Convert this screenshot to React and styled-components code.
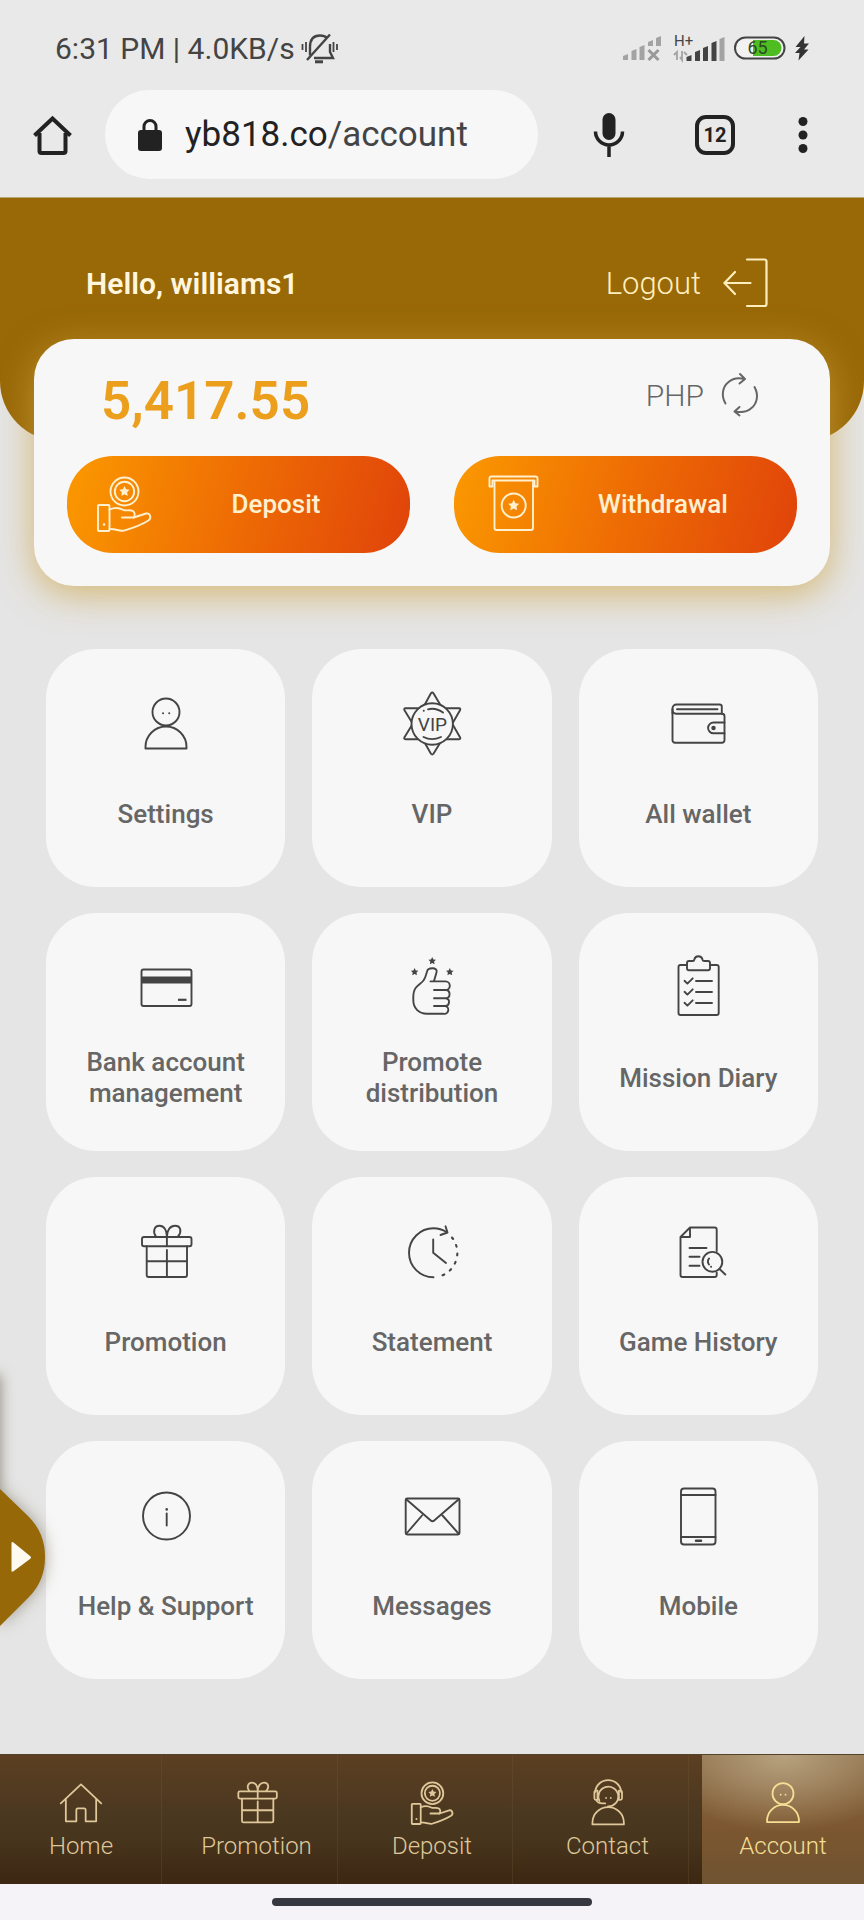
import React from 'react';
import styled, { createGlobalStyle } from 'styled-components';

const GlobalStyle = createGlobalStyle`
  * {
    box-sizing: border-box;
  }

  body {
    margin: 0;
    background: #f6f3f8;
    font-family: Roboto, "Liberation Sans", sans-serif;
  }

  button {
    padding: 0;
    border: 0;
    background: none;
    color: inherit;
    font: inherit;
    cursor: pointer;
  }

  a {
    color: inherit;
    text-decoration: none;
  }

  svg {
    display: block;
    flex: none;
  }
`;

const Page = styled.div`
  position: relative;
  overflow: hidden;
  background: #e5e5e5;
`;

/* phone status bar */

const StatusBar = styled.div`
  display: flex;
  align-items: center;
  justify-content: space-between;
  height: 90px;
  padding: 6px 54px 0 55px;
  background: #e9e9e9;
  color: #444;
  font-size: 30px;
`;

const StatusGroup = styled.div`
  display: flex;
  align-items: center;
  gap: ${ ({ $gap }) => $gap }px;
`;

/* browser toolbar */

const Toolbar = styled.div`
  display: flex;
  align-items: center;
  padding: 0 49px 18px 32px;
  border-bottom: 1px solid #b9a878;
  background: #e9e9e9;
  color: #222;
`;

const AddressBar = styled.div`
  display: flex;
  flex: 1;
  align-items: center;
  gap: 22px;
  height: 89px;
  margin: 0 41px 0 32px;
  padding-left: 32px;
  border-radius: 45px;
  background: #f7f7f7;
`;

const Url = styled.span`
  color: #444;
  font-size: 35px;

  b {
    color: #222;
    font-weight: 400;
  }
`;

const ToolbarActions = styled.div`
  display: flex;
  align-items: center;
  gap: 48px;
`;

const ToolbarButton = styled.button`
  display: flex;
  justify-content: center;
  width: ${ ({ $width }) => $width }px;
`;

const TabCount = styled.span`
  width: 40px;
  height: 40px;
  border: 4px solid #222;
  border-radius: 11px;
  font-size: 20px;
  font-weight: 700;
  line-height: 32px;
`;

/* account header */

const Hero = styled.header`
  padding: 60px 96px 133px 86px;
  border-radius: 0 0 60px 60px;
  background: #996807;
  color: #fff6dd;
`;

const HeroRow = styled.div`
  display: flex;
  align-items: center;
  justify-content: space-between;
  height: 50px;
`;

const Greeting = styled.h1`
  margin: 0;
  font-size: 30px;
  font-weight: 600;
`;

const Logout = styled.button`
  display: flex;
  align-items: center;
  gap: 21px;
  color: #ffeebd;
  font-size: 31px;
  font-weight: 300;
`;

const BalanceCard = styled.section`
  margin: -102px 34px 0;
  padding: 32px 33px 33px;
  border-radius: 40px;
  background: #f7f7f7;
  box-shadow: 0 8px 36px rgba(205, 162, 62, 0.7);
`;

const BalanceRow = styled.div`
  display: flex;
  justify-content: space-between;
  height: 60px;
  margin-bottom: 25px;
  padding: 0 37px 0 34px;
`;

const Amount = styled.div`
  color: #eb9f1c;
  font-size: 53px;
  font-weight: 600;
  line-height: 60px;
`;

const Currency = styled.div`
  display: flex;
  align-items: center;
  gap: 16px;
  height: 48px;
  color: #666;
  font-size: 30px;
  font-weight: 300;
`;

const CashButtons = styled.div`
  display: grid;
  grid-template-columns: 1fr 1fr;
  gap: 44px;
`;

const CashButton = styled.button`
  display: flex;
  align-items: center;
  height: 97px;
  padding: 0 18px 2px 21px;
  border-radius: 46px;
  background: linear-gradient(105deg, #fb9900, #ee6c04 50%, #e0430a);
  color: #fff0cf;
  font-size: 26px;
  font-weight: 500;

  span {
    flex: 1;
  }
`;

/* menu tiles */

const TileGrid = styled.main`
  display: grid;
  grid-template-columns: repeat(3, 1fr);
  gap: 26px 27px;
  padding: 63px 46px 75px;
`;

const Tile = styled.a`
  display: flex;
  flex-direction: column;
  align-items: center;
  gap: 23px;
  min-height: 238px;
  padding: 39px 20px 0;
  border-radius: 50px;
  background: #f7f7f7;
  color: #444;
`;

const TileLabel = styled.span`
  display: flex;
  align-items: center;
  min-height: 62px;
  color: #666;
  font-size: 26px;
  font-weight: 500;
  line-height: 31px;
  text-align: center;
`;

/* drawer handle hanging on the left edge */

const DrawerShade = styled.div`
  position: absolute;
  bottom: 400px;
  left: -20px;
  width: 20px;
  height: 145px;
  box-shadow: 0 0 14px rgba(80, 75, 50, 0.6);
`;

const DrawerHandle = styled.button`
  position: absolute;
  bottom: 278px;
  left: 0;
  filter: drop-shadow(0 0 8px rgba(90, 80, 50, 0.5));
`;

/* bottom navigation */

const BottomNav = styled.nav`
  display: flex;
  justify-content: space-between;
  border-top: 1px solid #54422c;
  background: linear-gradient(#5c3f22, #4b3820 45%, #48351d 65%, #3c2712);
`;

const NavItem = styled.a`
  display: flex;
  flex-direction: column;
  align-items: center;
  gap: 1px;
  width: 162px;
  padding: 20px 0 24px;
  box-shadow: ${ ({ $active }) => ($active ? 'none' : 'inset -1px 0 rgba(120, 95, 60, 0.25)') };
  background: ${ ({ $active }) => ($active
    ? 'radial-gradient(ellipse 80% 60% at 50% 0, #b7a17e, transparent), linear-gradient(#8a6c46, #7c5730 55%, #6f5330)'
    : 'none') };
  color: ${ ({ $active }) => ($active ? '#f5df94' : '#dfc79a') };
  font-size: 24px;
  font-weight: 300;
  line-height: 28px;
`;

const GestureBar = styled.div`
  display: flex;
  justify-content: center;
  padding: 14px 0;
  background: #f6f3f8;
`;

const GestureHandle = styled.div`
  width: 37%;
  height: 8px;
  border-radius: 4px;
  background: #36373f;
`;

/* icons, all drawn on a 72 unit square */

const Icon = ({ size = 72, stroke = 1.9, children }) => (
  <svg
    width={ size }
    height={ size }
    viewBox="0 0 72 72"
    fill="none"
    stroke="currentColor"
    strokeWidth={ stroke }
    strokeLinecap="round"
    strokeLinejoin="round"
    aria-hidden="true"
  >
    { children }
  </svg>
);

const Star = ({ x, y, r }) => {
  const points = Array.from({ length: 10 }, (_, i) => {
    const radius = i % 2 ? r * 0.5 : r;
    const angle = (i * Math.PI) / 5;
    return `${ (x + radius * Math.sin(angle)).toFixed(2) },${ (y - radius * Math.cos(angle)).toFixed(2) }`;
  });
  return <polygon points={ points.join(' ') } fill="currentColor" stroke="none" />;
};

const Person = () => (
  <>
    <circle cx="36" cy="24" r="13.5" />
    <path d="M15.5 60.5v-1.5a20.5 20.5 0 0 1 41 0v1.5z" />
    <path d="M33 25.3h.1M39.2 25.3h.1" />
  </>
);

const Vip = () => (
  <>
    <path d="M36 5L64.5 51.5H8z" stroke="none" />
    <path d="M36 4.500L53 36H19zM36 66.500L19 36H53z" stroke="none" />
    <path d="M28 18L34.800 5.500q1.400-2 2.800 0L45 18M28 53.500L34.800 65.500q1.400 2 2.800 0L45 53.500" />
    <path d="M22 20.300H9.500q-2 .2-1 2L16 34.500M22 51.300H9.500q-2-.2-1-2L16 37M50 20.300H63q2 .2 1 2L57 34.500M50 51.300H63q2-.2 1-2L57 37" />
    <circle cx="36.2" cy="36" r="20.7" fill="#f7f7f7" />
    <path d="M32 21.3c5-1.2 10.5 0 15 3.3M27.7 22.8h.1M27.5 49c5 2.6 12 2.6 17.5 0" />
    <text x="36.5" y="42.5" fill="currentColor" stroke="none" fontSize="19" fontWeight="400" textAnchor="middle">VIP</text>
  </>
);

const Wallet = () => (
  <>
    <path d="M10.5 25.5v-5a4 4 0 0 1 4-4h43a2.3 2.3 0 0 1 2.3 2.3v7" />
    <path d="M10.5 21v31.2a2.5 2.5 0 0 0 2.5 2.5h47a2.5 2.5 0 0 0 2.5-2.5v-24a2.5 2.5 0 0 0-2.5-2.5H14a3.5 3.5 0 0 1-3.5-3.5" />
    <path d="M15 21.3h40.5" />
    <path d="M62.5 34.5h-11a5.4 5.4 0 0 0 0 10.8h11" />
    <circle cx="51.5" cy="40" r="1.3" fill="currentColor" />
  </>
);

const BankCard = () => (
  <>
    <rect x="11.5" y="17.5" width="50" height="36.5" rx="2" />
    <path d="M12 25.5h49v5h-49z" fill="currentColor" />
    <path d="M48 47.8h8.500" strokeWidth="2.2" strokeLinecap="butt" />
  </>
);

const ThumbUp = () => (
  <>
    <Star x={ 36.2 } y={ 9 } r={ 4 } />
    <Star x={ 18.6 } y={ 20 } r={ 4 } />
    <Star x={ 53.8 } y={ 20 } r={ 4 } />
    <path d="M38 29L40.5 20.5C41.5 17.5 39 16.3 36.5 16.3C34 16.3 31.500 17 31 19.5C30 23 29.5 26 27.5 28.5C25 31.5 22 33 20 35.5C18 38 17.3 41 17.3 45V48C17.3 56 22.5 61.7 31 61.7H47a3.85 3.85 0 0 0 2.5-7.7" />
    <path d="M34.5 29.4H49.5a4.3 4.3 0 0 1 0 8.6H38M50 38a4.2 4.2 0 0 1 0 8.3H38M50 46.3a3.9 3.9 0 0 1-1 7.7H38" />
  </>
);

const Clipboard = () => (
  <>
    <path d="M25 13H18.5a2 2 0 0 0-2 2V61a2 2 0 0 0 2 2H54.7a2 2 0 0 0 2-2V15a2 2 0 0 0-2-2H48" />
    <path d="M27 18.3h19a2 2 0 0 0 2-2V11a2 2 0 0 0-2-2H42a1.5 1.5 0 0 1-1.5-1.5a4.2 4.2 0 0 0-8.200 0A1.5 1.5 0 0 1 31 9H27a2 2 0 0 0-2 2v5.3a2 2 0 0 0 2 2z" />
    <path d="M22.5 28.8l2.9 2.8 5.3-5.3M34 29H50M22.5 39.8l2.9 2.8 5.3-5.3M34 40H50M22.5 50.8l2.9 2.8 5.3-5.3M34 51H50" />
  </>
);

const Gift = () => (
  <>
    <rect x="12" y="21" width="49.5" height="9.3" rx="2" />
    <path d="M16.7 30.3V59a2 2 0 0 0 2 2H55a2 2 0 0 0 2-2V30.3M16.7 45.3H57M36.9 21v9M36.9 34V61" />
    <path d="M36.9 20.5C36.9 14 34 9.7 29.5 9.7C24 9.7 22.5 16 26 20.5M36.9 20.5C36.9 14 40.5 9.7 45 9.7C51 9.7 52 16 48 20.5" />
  </>
);

const ClockBack = () => (
  <>
    <path d="M37.5 61.3a24.5 24.5 0 0 1 0-49c4.7 0 9 1.2 13 3.7" />
    <path d="M49.500 10.3l2 6.2-7 2.5M37.2 23.5V36.7L50 47" />
    <path d="M56 21.5A24.500 24.500 0 0 1 43 60.5" strokeDasharray="1.8 6.8" strokeWidth="2.1" />
  </>
);

const DocSearch = () => (
  <>
    <path d="M54.7 35V13.5a2 2 0 0 0-2-2H28L18.5 21V59a2 2 0 0 0 2 2H52.7a2 2 0 0 0 2-2V56.5M28 11.5V21H18.5" />
    <path d="M27.5 32H44.5M27.5 40.8H37.5M27.5 49.7H37.5" />
    <circle cx="50.4" cy="45.8" r="9.9" />
    <path d="M57.5 53L63.3 58.5M47 42.5a5 5 0 0 0 0 6M49 50.8h.1" />
  </>
);

const Info = () => (
  <>
    <circle cx="36.5" cy="36" r="23.5" />
    <path d="M36.7 29.3v.1" strokeWidth="2.5" />
    <path d="M36.7 33.5V45.5" />
  </>
);

const Envelope = () => (
  <>
    <rect x="9.7" y="18.5" width="53.8" height="36" rx="1.5" />
    <path d="M10.5 19.5L34.5 40.3a3 3 0 0 0 4 0L62.5 19.5M10.5 53.5L26 35.5M62.5 53.5L46.5 35.5" />
  </>
);

const Phone = () => (
  <>
    <rect x="19" y="8.5" width="34.5" height="56" rx="3" />
    <path d="M19 15H53.5M19 57H53.5" />
    <path d="M34 60.7h5" strokeWidth="2.5" />
  </>
);

const CoinHand = () => (
  <>
    <circle cx="36.5" cy="23.5" r="14" />
    <circle cx="36.5" cy="23.5" r="9.7" />
    <Star x={ 36.5 } y={ 23.5 } r={ 5.5 } />
    <rect x="10" y="37" width="11.5" height="26" rx="1" />
    <path d="M16 56.5h.1" strokeWidth="2.5" />
    <path d="M21.5 41.5C26 39.5 31 39.5 35 41.8C37 42.8 41 42 43.5 42.5C46.5 43 47.5 46.5 45.8 49.5H34" />
    <path d="M45.8 49.5L58 45.5C62 44.5 64 50 60.5 52.5C54 56.5 45 60 36 62.7C33 63.5 29 61 21.5 61" />
  </>
);

const CashSlot = () => (
  <>
    <path d="M14.5 18.5V10.5q0-2 2-2H60.5q2 0 2 2v8h-3v-6H17.5v6z" />
    <path d="M19.5 14V60a2 2 0 0 0 2 2H56a2 2 0 0 0 2-2V14" />
    <circle cx="38.7" cy="37.5" r="12" />
    <Star x={ 38.7 } y={ 37.5 } r={ 5.8 } />
  </>
);

const House = () => (
  <path d="M10 36.5L36 12 62 36.5M16.5 31V59.500h13.500V45a2 2 0 0 1 2-2h8a2 2 0 0 1 2 2V59.500H55.500V31" />
);

const Agent = () => (
  <>
    <path d="M25 33.5A12.8 12.8 0 1 1 36 40.5" />
    <path d="M19.5 22a16.8 16.8 0 0 1 33.5 0M22.5 20h-2a2 2 0 0 0-2 2v8a2 2 0 0 0 2 2h2zM50 20h2a2 2 0 0 1 2 2v8a2 2 0 0 1-2 2h-2z" />
    <path d="M21 32.5q1.5 4 8 4h3.5M33.5 29.5h.1M39.5 29.5h.1" />
    <path d="M16 63.5v-2a20.2 20.2 0 0 1 40.4 0v2z" />
  </>
);

const tiles = [
  { label: 'Settings', Drawing: Person },
  { label: 'VIP', Drawing: Vip },
  { label: 'All wallet', Drawing: Wallet },
  { label: 'Bank account management', Drawing: BankCard },
  { label: 'Promote distribution', Drawing: ThumbUp },
  { label: 'Mission Diary', Drawing: Clipboard },
  { label: 'Promotion', Drawing: Gift },
  { label: 'Statement', Drawing: ClockBack },
  { label: 'Game History', Drawing: DocSearch },
  { label: 'Help & Support', Drawing: Info },
  { label: 'Messages', Drawing: Envelope },
  { label: 'Mobile', Drawing: Phone },
];

const navItems = [
  { label: 'Home', Drawing: House },
  { label: 'Promotion', Drawing: Gift },
  { label: 'Deposit', Drawing: CoinHand },
  { label: 'Contact', Drawing: Agent },
  { label: 'Account', Drawing: Person, active: true },
];

const MutedBell = () => (
  <svg width="38" height="32" viewBox="0 0 38 32" fill="none" stroke="#444" strokeWidth="2.4">
    <path d="M9 23.5V15C9 7 13 3.5 19 3.5c3 0 5.5 1 7 2.5M29 12v8l3 6H13" />
    <path d="M6 28L29 2.5" />
    <path d="M14 29.8h8" strokeWidth="3" />
    <path d="M1.5 12v6M5 10v10M32.500 10v10M36 12v6" strokeWidth="1.8" />
  </svg>
);

const SignalOff = () => (
  <svg width="40" height="28" viewBox="0 0 40 28" fill="#a3a3a3">
    <path d="M1 26v-4l5-2v6zM9.5 26V17l5-2v11zM17.5 26V13l5-2v15zM26 12V8l5-2v6zM34 12V4l5-2v10z" />
    <path d="M26.5 16l10 10M36.5 16l-10 10" stroke="#999" strokeWidth="3" />
  </svg>
);

const SignalOn = () => (
  <svg width="56" height="34" viewBox="0 0 56 34" fill="#444">
    <text x="4" y="15" fontSize="15">H+</text>
    <path d="M4 24l3-3v8M12 20v9l-2-3M14 21l3 3" fill="none" stroke="#a3a3a3" strokeWidth="1.8" />
    <path d="M16.5 30v-4l5-2v6zM25 30v-9l5-2v11zM33 30V17l5-2v15zM41.5 30V12l5-2v20z" />
    <path d="M49.5 30V8l5-2v24z" fill="#a3a3a3" />
  </svg>
);

const Battery = () => (
  <svg width="52" height="24" viewBox="0 0 52 24">
    <rect x="1" y="1.5" width="49.5" height="21" rx="10.5" fill="#f2f2f2" stroke="#444" strokeWidth="2" />
    <path d="M19 4H39.5a8 8 0 0 1 0 16H19z" fill="#4dbd22" />
    <text x="23.5" y="18" fontSize="18" fill="#2e4a22" textAnchor="middle">65</text>
  </svg>
);

const Bolt = () => (
  <svg width="16" height="26" viewBox="0 0 16 26" fill="#333">
    <path d="M10.500 1L1.500 12h5L1 18h4.500L4.500 25.500 14.500 14.500H10L15 8.500H10z" />
  </svg>
);

const App = () => (
  <>
    <GlobalStyle />
    <Page>
      <StatusBar>
        <StatusGroup $gap={ 6 }>
          <span>6:31 PM | 4.0KB/s</span>
          <MutedBell />
        </StatusGroup>
        <StatusGroup $gap={ 8 }>
          <SignalOff />
          <SignalOn />
          <Battery />
          <Bolt />
        </StatusGroup>
      </StatusBar>

      <Toolbar>
        <ToolbarButton $width={ 41 } aria-label="Home page">
          <svg width="41" height="42" viewBox="0 0 41 42" fill="none" stroke="#222" strokeWidth="4">
            <path d="M2.5 21.5L20.5 4.5 38.5 21.5M7.5 19v18a2 2 0 0 0 2 2h22a2 2 0 0 0 2-2V19" />
          </svg>
        </ToolbarButton>
        <AddressBar>
          <svg width="26" height="34" viewBox="0 0 26 34">
            <rect x="1" y="12" width="24" height="21" rx="3" fill="#222" />
            <path d="M7 13V8.500a6 6 0 0 1 12 0V13" fill="none" stroke="#222" strokeWidth="3" />
          </svg>
          <Url><b>yb818.co</b>/account</Url>
        </AddressBar>
        <ToolbarActions>
          <ToolbarButton $width={ 60 } aria-label="Voice search">
            <svg width="32" height="46" viewBox="0 0 32 46" fill="none" stroke="#222" strokeWidth="3.5">
              <rect x="9.5" y="1" width="13" height="27" rx="6.5" fill="#222" stroke="none" />
              <path d="M2.5 19.5a13.5 13.5 0 0 0 27 0M16 33v12" />
            </svg>
          </ToolbarButton>
          <ToolbarButton $width={ 56 } aria-label="Open tabs">
            <TabCount>12</TabCount>
          </ToolbarButton>
          <ToolbarButton $width={ 24 } aria-label="Browser menu">
            <svg width="10" height="38" viewBox="0 0 10 38" fill="#222">
              <circle cx="5" cy="5.5" r="4.5" />
              <circle cx="5" cy="19" r="4.5" />
              <circle cx="5" cy="32.5" r="4.5" />
            </svg>
          </ToolbarButton>
        </ToolbarActions>
      </Toolbar>

      <Hero>
        <HeroRow>
          <Greeting>Hello, williams1</Greeting>
          <Logout>
            Logout
            <svg width="46" height="50" viewBox="0 0 46 50" fill="none" stroke="currentColor" strokeWidth="2.2" strokeLinecap="round">
              <path d="M25 1.5H42.5a2 2 0 0 1 2 2V46a2 2 0 0 1-2 2H25M28.5 25H2.5M13 14L2.5 25 13 36" />
            </svg>
          </Logout>
        </HeroRow>
      </Hero>

      <BalanceCard>
        <BalanceRow>
          <Amount>5,417.55</Amount>
          <Currency>
            PHP
            <button aria-label="Refresh balance">
              <svg width="40" height="46" viewBox="0 0 40 46" fill="none" stroke="#666" strokeWidth="2" strokeLinecap="round" strokeLinejoin="round">
                <path d="M5.5 31.5C1 24 2.5 15 8 10.5C12.5 6.5 18 5.5 24.500 7M20 2l5 5-5.5 4.5" />
                <path d="M34.5 15C39 23 37 31.5 31.5 36C27.5 39.5 22 41 15.5 39.5M19.5 35l-5 4.5 5 4" />
              </svg>
            </button>
          </Currency>
        </BalanceRow>
        <CashButtons>
          <CashButton>
            <Icon><CoinHand /></Icon>
            <span>Deposit</span>
          </CashButton>
          <CashButton>
            <Icon><CashSlot /></Icon>
            <span>Withdrawal</span>
          </CashButton>
        </CashButtons>
      </BalanceCard>

      <TileGrid>
        { tiles.map(({ label, Drawing }) => (
          <Tile key={ label } href="#">
            <Icon><Drawing /></Icon>
            <TileLabel>{ label }</TileLabel>
          </Tile>
        )) }
      </TileGrid>

      <BottomNav>
        { navItems.map(({ label, Drawing, active }) => (
          <NavItem key={ label } href="#" $active={ active }>
            <Icon size={ 56 } stroke={ 2.3 }><Drawing /></Icon>
            { label }
          </NavItem>
        )) }
      </BottomNav>

      <GestureBar>
        <GestureHandle />
      </GestureBar>

      <DrawerShade />
      <DrawerHandle aria-label="Open drawer">
        <svg width="46" height="170" viewBox="0 0 46 170">
          <path d="M0 17L28 44C40 56 45 69 45 85S40 114 28 126L0 154z" fill="#966808" />
          <path d="M11.5 71.5v27q0 2 2 .8L30 87q2-1.500 0-3L13.5 70.5q-2-1.2-2 1z" fill="#fffaf0" />
        </svg>
      </DrawerHandle>
    </Page>
  </>
);

export default App;
